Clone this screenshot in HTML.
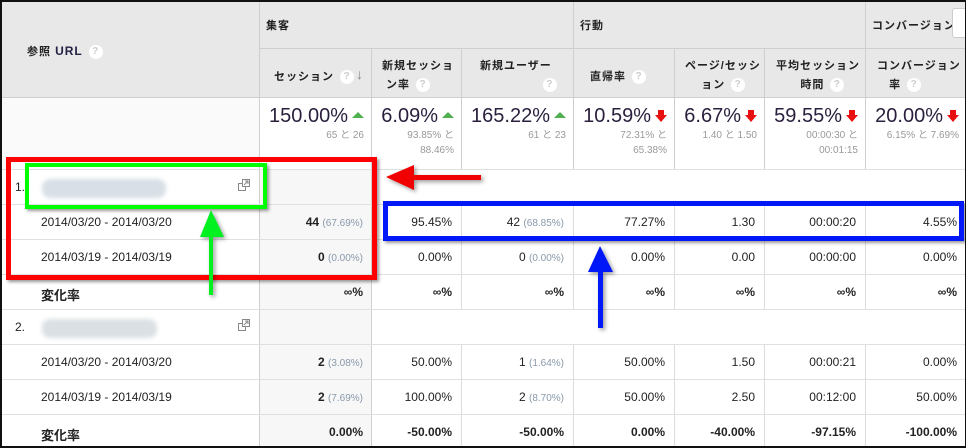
<!DOCTYPE html>
<html><head><meta charset="utf-8"><style>
*{margin:0;padding:0;box-sizing:border-box}
body{width:966px;height:448px;overflow:hidden;background:#fff;font-family:"Liberation Sans","Noto Sans CJK JP",sans-serif;position:relative}
.a{position:absolute}
.hd{background:#e8e8e8}
.h{font-size:11px;font-weight:bold;color:#222;letter-spacing:1px}
.q{display:inline-block;width:14px;height:14px;border-radius:7px;background:#fff;color:#ccc;font-size:10px;text-align:center;line-height:14px;font-weight:bold;vertical-align:middle;margin-left:6px}
.vl{position:absolute;width:1px;background:#cfcfcf}
.hl{position:absolute;height:1px;background:#e0e0e0;left:0;width:966px}
.big{font-size:20px;color:#2a1f3d;text-align:right}
.sm{font-size:10px;color:#999;text-align:right;line-height:15px}
.up{display:inline-block;width:0;height:0;border-left:6px solid transparent;border-right:6px solid transparent;border-bottom:6px solid #50b050;position:relative;top:-4px;margin-left:4px}
.dn{display:inline-block;width:12px;height:12px;position:relative;margin-left:4px;top:0}
.c{font-size:12px;color:#222;text-align:right}
.g{color:#8899aa;font-size:10px}
.d{font-size:12px;color:#222}
</style></head><body>
<div class="a hd" style="left:0;top:0;width:966px;height:97px"></div>
<div class="a" style="left:259px;top:97px;width:707px;height:73px;background:#fff"></div>
<div class="a" style="left:0;top:97px;width:259px;height:73px;background:#fafafa"></div>
<div class="a" style="left:259px;top:204px;width:112px;height:105px;background:#f7f7f7"></div>
<div class="a" style="left:259px;top:309px;width:112px;height:139px;background:#f7f7f7"></div>
<div class="a" style="left:259px;top:170px;width:112px;height:34px;background:#f7f7f7"></div>
<div class="vl" style="left:259px;top:0;height:448px"></div>
<div class="a" style="left:259px;top:48px;width:707px;height:1px;background:#cfcfcf"></div>
<div class="a" style="left:0;top:97px;width:966px;height:1px;background:#cfcfcf"></div>
<div class="vl" style="left:371px;top:48px;height:400px"></div>
<div class="vl" style="left:461px;top:48px;height:122px"></div>
<div class="vl" style="left:573px;top:0;height:170px"></div>
<div class="vl" style="left:674px;top:48px;height:122px"></div>
<div class="vl" style="left:764px;top:48px;height:122px"></div>
<div class="vl" style="left:865px;top:0;height:170px"></div>
<div class="vl" style="left:461px;top:204px;height:105px;background:#ddd"></div>
<div class="vl" style="left:573px;top:204px;height:105px;background:#ddd"></div>
<div class="vl" style="left:674px;top:204px;height:105px;background:#ddd"></div>
<div class="vl" style="left:764px;top:204px;height:105px;background:#ddd"></div>
<div class="vl" style="left:865px;top:204px;height:105px;background:#ddd"></div>
<div class="vl" style="left:461px;top:344px;height:104px;background:#ddd"></div>
<div class="vl" style="left:573px;top:344px;height:104px;background:#ddd"></div>
<div class="vl" style="left:674px;top:344px;height:104px;background:#ddd"></div>
<div class="vl" style="left:764px;top:344px;height:104px;background:#ddd"></div>
<div class="vl" style="left:865px;top:344px;height:104px;background:#ddd"></div>
<div class="hl" style="top:169px"></div><div class="hl" style="top:204px"></div><div class="hl" style="top:239px"></div><div class="hl" style="top:274px"></div><div class="hl" style="top:309px"></div><div class="hl" style="top:344px"></div><div class="hl" style="top:379px"></div><div class="hl" style="top:414px"></div>
<div class="a h" style="left:27px;top:43px">参照 <span style="color:#224;font-size:12px">URL</span><span class="q">?</span></div>
<div class="a h" style="left:266px;top:17px">集客</div>
<div class="a h" style="left:580px;top:17px">行動</div>
<div class="a h" style="left:872px;top:17px">コンバージョン</div>
<div class="a" style="left:952px;top:8px;width:20px;height:30px;background:#fff;border:1px solid #ccc;border-radius:3px"></div>
<div class="a h" style="left:274px;top:68px">セッション<span class="q">?</span></div>
<div class="a" style="left:356px;top:66px;color:#888;font-size:14px;font-weight:bold">↓</div>
<div class="a h" style="left:382px;top:57px;line-height:19px">新規セッショ<br>&nbsp;ン率<span class="q">?</span></div>
<div class="a h" style="left:480px;top:57px;line-height:19px">新規ユーザー<br>&nbsp;&nbsp;&nbsp;&nbsp;&nbsp;&nbsp;&nbsp;&nbsp;&nbsp;&nbsp;&nbsp;&nbsp;&nbsp;&nbsp;<span class="q">?</span></div>
<div class="a h" style="left:590px;top:68px">直帰率<span class="q">?</span></div>
<div class="a h" style="left:685px;top:57px;line-height:19px">ページ/セッシ<br>&nbsp;&nbsp;&nbsp;&nbsp;ョン<span class="q">?</span></div>
<div class="a h" style="left:776px;top:57px;line-height:19px">平均セッション<br>&nbsp;&nbsp;&nbsp;&nbsp;&nbsp;&nbsp;時間<span class="q">?</span></div>
<div class="a h" style="left:877px;top:57px;line-height:19px">コンバージョン<br>&nbsp;&nbsp;&nbsp;率<span class="q">?</span></div>
<svg width="0" height="0" style="position:absolute"><defs><symbol id="dn" viewBox="0 0 12 12"><path d="M3 0h6v5h3l-6 7-6-7h3z" fill="#e81010"/></symbol></defs></svg>
<div class="a" style="left:259px;top:105px;width:105px"><div class="big">150.00%<span class="up"></span></div><div class="sm">65 と 26</div></div>
<div class="a" style="left:371px;top:105px;width:83px"><div class="big">6.09%<span class="up"></span></div><div class="sm">93.85% と<br>88.46%</div></div>
<div class="a" style="left:461px;top:105px;width:105px"><div class="big">165.22%<span class="up"></span></div><div class="sm">61 と 23</div></div>
<div class="a" style="left:573px;top:105px;width:94px"><div class="big">10.59%<svg class="dn"><use href="#dn"/></svg></div><div class="sm">72.31% と<br>65.38%</div></div>
<div class="a" style="left:674px;top:105px;width:83px"><div class="big">6.67%<svg class="dn"><use href="#dn"/></svg></div><div class="sm">1.40 と 1.50</div></div>
<div class="a" style="left:764px;top:105px;width:94px"><div class="big">59.55%<svg class="dn"><use href="#dn"/></svg></div><div class="sm">00:00:30 と<br>00:01:15</div></div>
<div class="a" style="left:865px;top:105px;width:94px"><div class="big">20.00%<svg class="dn"><use href="#dn"/></svg></div><div class="sm">6.15% と 7.69%</div></div>
<div class="a d" style="left:15px;top:180px">1.</div>
<div class="a" style="left:42px;top:179px;width:124px;height:19px;background:#d8dfe6;border-radius:8px;filter:blur(2px)"></div>
<div class="a d" style="left:15px;top:320px">2.</div>
<div class="a" style="left:42px;top:319px;width:115px;height:19px;background:#dbe0e4;border-radius:8px;filter:blur(2px)"></div>
<svg class="a" style="left:238px;top:179px" width="12" height="12"><rect x="0.5" y="4.5" width="7" height="7" fill="#fff" stroke="#888"/><rect x="4.5" y="0.5" width="7" height="7" fill="#fff" stroke="#888"/><path d="M6 6l4-4M7 2h3v3" stroke="#888" fill="none"/></svg>
<svg class="a" style="left:238px;top:319px" width="12" height="12"><rect x="0.5" y="4.5" width="7" height="7" fill="#fff" stroke="#888"/><rect x="4.5" y="0.5" width="7" height="7" fill="#fff" stroke="#888"/><path d="M6 6l4-4M7 2h3v3" stroke="#888" fill="none"/></svg>
<div class="a d" style="left:41px;top:215px">2014/03/20 - 2014/03/20</div>
<div class="a d" style="left:41px;top:250px">2014/03/19 - 2014/03/19</div>
<div class="a d" style="left:41px;top:285px;font-weight:bold;font-size:13px">変化率</div>
<div class="a d" style="left:41px;top:355px">2014/03/20 - 2014/03/20</div>
<div class="a d" style="left:41px;top:390px">2014/03/19 - 2014/03/19</div>
<div class="a d" style="left:41px;top:425px;font-weight:bold;font-size:13px">変化率</div>
<div class="a" style="left:0;top:215px;width:966px">
<div class="a c" style="right:603px;width:110px"><b>44</b> <span class="g">(67.69%)</span></div>
<div class="a c" style="right:514px">95.45%</div>
<div class="a c" style="right:402px">42 <span class="g">(68.85%)</span></div>
<div class="a c" style="right:301px">77.27%</div>
<div class="a c" style="right:211px">1.30</div>
<div class="a c" style="right:110px">00:00:20</div>
<div class="a c" style="right:9px">4.55%</div>
</div>
<div class="a" style="left:0;top:250px;width:966px">
<div class="a c" style="right:603px;width:110px"><b>0</b> <span class="g">(0.00%)</span></div>
<div class="a c" style="right:514px">0.00%</div>
<div class="a c" style="right:402px">0 <span class="g">(0.00%)</span></div>
<div class="a c" style="right:301px">0.00%</div>
<div class="a c" style="right:211px">0.00</div>
<div class="a c" style="right:110px">00:00:00</div>
<div class="a c" style="right:9px">0.00%</div>
</div>
<div class="a" style="left:0;top:285px;width:966px;font-weight:bold">
<div class="a c" style="right:603px">∞%</div><div class="a c" style="right:514px">∞%</div><div class="a c" style="right:402px">∞%</div><div class="a c" style="right:301px">∞%</div><div class="a c" style="right:211px">∞%</div><div class="a c" style="right:110px">∞%</div><div class="a c" style="right:9px">∞%</div>
</div>
<div class="a" style="left:0;top:355px;width:966px">
<div class="a c" style="right:603px;width:110px"><b>2</b> <span class="g">(3.08%)</span></div>
<div class="a c" style="right:514px">50.00%</div>
<div class="a c" style="right:402px">1 <span class="g">(1.64%)</span></div>
<div class="a c" style="right:301px">50.00%</div>
<div class="a c" style="right:211px">1.50</div>
<div class="a c" style="right:110px">00:00:21</div>
<div class="a c" style="right:9px">0.00%</div>
</div>
<div class="a" style="left:0;top:390px;width:966px">
<div class="a c" style="right:603px;width:110px"><b>2</b> <span class="g">(7.69%)</span></div>
<div class="a c" style="right:514px">100.00%</div>
<div class="a c" style="right:402px">2 <span class="g">(8.70%)</span></div>
<div class="a c" style="right:301px">50.00%</div>
<div class="a c" style="right:211px">2.50</div>
<div class="a c" style="right:110px">00:12:00</div>
<div class="a c" style="right:9px">50.00%</div>
</div>
<div class="a" style="left:0;top:425px;width:966px;font-weight:bold">
<div class="a c" style="right:603px;font-weight:bold">0.00%</div><div class="a c" style="right:514px;font-weight:bold">-50.00%</div><div class="a c" style="right:402px;font-weight:bold">-50.00%</div><div class="a c" style="right:301px;font-weight:bold">0.00%</div><div class="a c" style="right:211px;font-weight:bold">-40.00%</div><div class="a c" style="right:110px;font-weight:bold">-97.15%</div><div class="a c" style="right:9px;font-weight:bold">-100.00%</div>
</div>
<div class="a" style="left:6px;top:157px;width:371px;height:123px;border:5px solid #f00;box-shadow:2px 2px 3px rgba(0,0,0,.4)"></div>
<div class="a" style="left:25px;top:163px;width:242px;height:46px;border:4px solid #0f0;box-shadow:2px 2px 3px rgba(0,0,0,.4)"></div>
<div class="a" style="left:383px;top:201px;width:581px;height:40px;border:5px solid #0018f8;box-shadow:2px 2px 3px rgba(0,0,0,.4)"></div>
<svg class="a" style="left:0;top:0" width="966" height="448">
<g style="filter:drop-shadow(2px 2px 2px rgba(0,0,0,.4))">
<path d="M209 236h4v59h-4z M200 237l11-27 13 27z" fill="#00f020"/>
<path d="M413 175h68v5h-68z M386 177l28-12v25z" fill="#f00000"/>
<path d="M598 272h5v56h-5z M588 272l12-26 13 26z" fill="#0018f8"/>
</g>
</svg>
<div class="a" style="left:0;top:0;width:966px;height:448px;border:2px solid #111;border-right-width:1px"></div>
</body></html>
